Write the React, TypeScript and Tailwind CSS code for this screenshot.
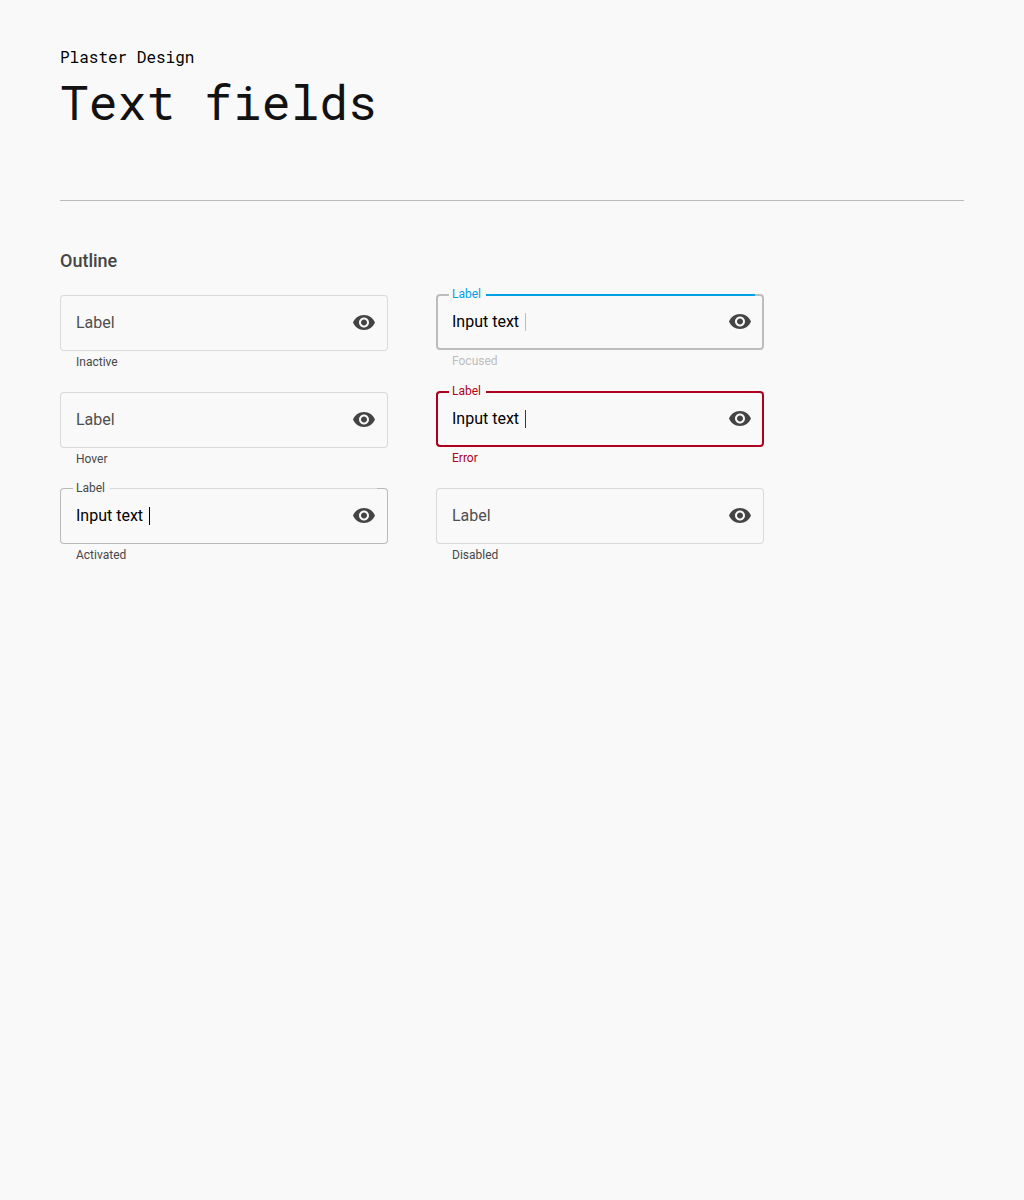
import { useId, useState } from 'react';

type State = 'inactive' | 'hover' | 'activated' | 'focused' | 'error' | 'disabled';

type Tone = {
  frame: string;
  top: string;
  end: string;
  label: string;
  caret: string;
  helper: string;
};

const resting: Tone = {
  frame: 'border-[#dadada]',
  top: 'border-t-[#dadada]',
  end: 'w-[9px]',
  label: 'text-[#4f4f4f]',
  caret: 'bg-black',
  helper: 'text-[#474747]',
};

const tones: Record<State, Tone> = {
  inactive: resting,
  hover: resting,
  disabled: resting,
  activated: {
    ...resting,
    frame: 'border-[#b9b9b9]',
    end: 'w-[11px]',
    label: 'text-[#474747]',
  },
  focused: {
    frame: 'border-[#bdbdbd]',
    top: 'border-t-[#00a0e4]',
    end: 'w-[9px]',
    label: 'text-[#00a0e4]',
    caret: 'bg-[#bdbdbd]',
    helper: 'text-[#bdbdbd]',
  },
  error: {
    frame: 'border-[#b00020]',
    top: 'border-t-[#b00020]',
    end: 'w-[9px]',
    label: 'text-[#b00020]',
    caret: 'bg-[#b00020]',
    helper: 'text-[#b00020]',
  },
};

function EyeIcon() {
  return (
    <svg viewBox="0 0 24 24" fill="currentColor" aria-hidden="true" className="size-6">
      <path d="M12 4C7 4 2.73 7.11 1 11.5c1.73 4.39 6 7.5 11 7.5s9.27-3.11 11-7.5C21.27 7.11 17 4 12 4zm0 12.5c-2.76 0-5-2.24-5-5s2.24-5 5-5 5 2.24 5 5-2.24 5-5 5zm0-8c-1.66 0-3 1.34-3 3s1.34 3 3 3 3-1.34 3-3-1.34-3-3-3z" />
    </svg>
  );
}

function TextField({ state, helper, initial = '' }: { state: State; helper: string; initial?: string }) {
  const id = useId();
  const [value, setValue] = useState(initial);
  const tone = tones[state];
  const floating = value !== '';
  const thick = state === 'focused' || state === 'error';

  return (
    <div>
      <div className="relative flex h-14 items-center pr-3 pl-4">
        {/* Outline in four pieces, leaving a notch in the top edge for the label */}
        <div className="pointer-events-none absolute inset-0 flex">
          <div
            className={`w-[13px] rounded-l border-r-0 ${thick ? 'border-y-2 border-l-2' : 'border-y border-l'} ${tone.frame}`}
          />
          {floating && (
            <div className={`pr-[5px] pl-[3px] ${thick ? 'border-b-2' : 'border-b'} ${tone.frame}`}>
              <label htmlFor={id} className={`-mt-2 block text-xs leading-4 ${tone.label}`}>
                Label
              </label>
            </div>
          )}
          <div className={`flex-1 ${thick ? 'border-y-2' : 'border-y'} ${tone.frame} ${tone.top}`} />
          <div
            className={`rounded-r ${tone.end} ${thick ? 'border-y-2 border-r-2' : 'border-y border-r'} ${tone.frame}`}
          />
        </div>
        {!floating && (
          <label htmlFor={id} className={`pointer-events-none absolute left-4 text-base ${tone.label}`}>
            Label
          </label>
        )}
        <input
          id={id}
          type="text"
          value={value}
          onChange={(e) => setValue(e.target.value)}
          disabled={state === 'disabled'}
          aria-invalid={state === 'error'}
          aria-describedby={`${id}-helper`}
          className={`min-w-0 bg-transparent text-base text-black outline-none ${floating ? 'field-sizing-content' : 'flex-1'}`}
        />
        {floating && <span className={`ml-1.5 h-[18px] w-px ${tone.caret}`} />}
        <button type="button" aria-label="Show text" className="ml-auto text-[#444444]">
          <EyeIcon />
        </button>
      </div>
      <p id={`${id}-helper`} className={`mt-[3px] pl-4 text-xs leading-4 ${tone.helper}`}>
        {helper}
      </p>
    </div>
  );
}

export default function App() {
  return (
    <main className="min-h-screen bg-[#f9f9f9] px-[60px] pt-[47px] pb-12 font-[Roboto,sans-serif]">
      <header className="border-b border-[#bababa] pb-[68px] font-['Roboto_Mono','Liberation_Mono',monospace]">
        <p className="text-base leading-5 text-black">Plaster Design</p>
        <h1 className="mt-[5px] text-5xl leading-[60px] text-[#121212]">Text fields</h1>
      </header>
      <section className="max-w-[704px] pt-12">
        <h2 className="text-lg leading-6 font-medium text-[#444444]">Outline</h2>
        <div className="mt-[21px] grid grid-cols-2 gap-12">
          <div className="flex flex-col justify-between pt-px">
            <TextField state="inactive" helper="Inactive" />
            <TextField state="hover" helper="Hover" />
            <TextField state="activated" helper="Activated" initial="Input text" />
          </div>
          <div className="flex flex-col gap-[22px]">
            <TextField state="focused" helper="Focused" initial="Input text" />
            <TextField state="error" helper="Error" initial="Input text" />
            <TextField state="disabled" helper="Disabled" />
          </div>
        </div>
      </section>
    </main>
  );
}
